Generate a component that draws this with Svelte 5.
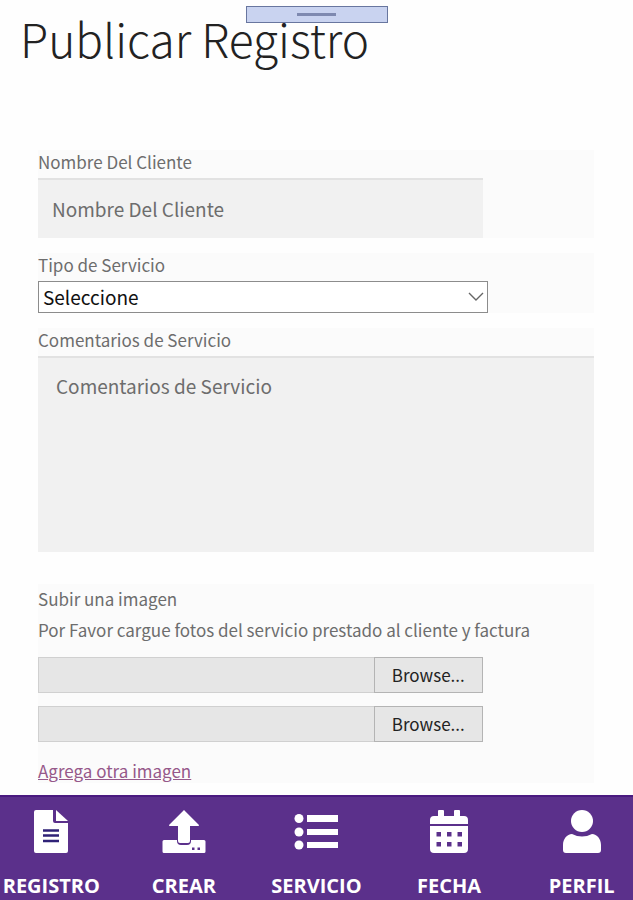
<script lang="ts">
  type Upload = { id: number; name: string };

  const navItems = [
    { id: 'registro', label: 'REGISTRO' },
    { id: 'crear', label: 'CREAR' },
    { id: 'servicio', label: 'SERVICIO' },
    { id: 'fecha', label: 'FECHA' },
    { id: 'perfil', label: 'PERFIL' },
  ];

  let client = $state('');
  let service = $state('');
  let comments = $state('');
  let uploads = $state<Upload[]>([
    { id: 1, name: '' },
    { id: 2, name: '' },
  ]);

  function browse(id: number) {
    document.getElementById(`file-${id}`)?.click();
  }

  function picked(event: Event, upload: Upload) {
    const input = event.currentTarget as HTMLInputElement;
    upload.name = input.files?.[0]?.name ?? '';
  }

  function addUpload(event: MouseEvent) {
    event.preventDefault();
    uploads.push({ id: uploads.length + 1, name: '' });
  }
</script>

<div class="page">
  <div class="handle"></div>

  <main>
    <h1>Publicar Registro</h1>

    <form>
      <div class="group">
        <label for="client">Nombre Del Cliente</label>
        <input id="client" class="field client" type="text" placeholder="Nombre Del Cliente" bind:value={client} />
      </div>

      <div class="group">
        <label for="service">Tipo de Servicio</label>
        <div class="select-wrap">
          <select id="service" bind:value={service}>
            <option value="">Seleccione</option>
          </select>
          <svg class="chevron" viewBox="0 0 16 10" aria-hidden="true">
            <path d="M1 1l7 7 7-7" fill="none" stroke="#666" stroke-width="1.4" />
          </svg>
        </div>
      </div>

      <div class="group">
        <label for="comments">Comentarios de Servicio</label>
        <textarea id="comments" class="field comments" placeholder="Comentarios de Servicio" bind:value={comments}></textarea>
      </div>

      <div class="group images">
        <p>Subir una imagen</p>
        <p class="hint">Por Favor cargue fotos del servicio prestado al cliente y factura</p>
        {#each uploads as upload (upload.id)}
          <div class="upload">
            <input class="path" type="text" readonly value={upload.name} aria-label="Imagen {upload.id}" />
            <button type="button" onclick={() => browse(upload.id)}>Browse...</button>
            <input id="file-{upload.id}" type="file" accept="image/*" hidden onchange={(e) => picked(e, upload)} />
          </div>
        {/each}
        <a class="add" href="#agregar" onclick={addUpload}>Agrega otra imagen</a>
      </div>
    </form>
  </main>

  <nav>
    <ul>
      {#each navItems as item}
        <li>
          <a href="#{item.id}">
            <svg viewBox="0 0 44 44" fill="#fff" aria-hidden="true">
              {#if item.id === 'registro'}
                <path d="M7 0h17v11a2 2 0 0 0 2 2h13v28a2 2 0 0 1-2 2H7a2 2 0 0 1-2-2V2a2 2 0 0 1 2-2z" />
                <path d="M27 0l12 11H27z" />
                <path d="M14 20.500h16M14 25.500h16M14 31h16" fill="none" stroke="#2f2277" stroke-width="2.400" />
              {:else if item.id === 'crear'}
                <path fill-rule="evenodd" d="M2 30h13v1a4 4 0 0 0 4 4h6a4 4 0 0 0 4-4v-1h13a1.500 1.500 0 0 1 1.500 1.500v10A1.500 1.500 0 0 1 42 43H2a1.500 1.500 0 0 1-1.500-1.500v-10A1.500 1.500 0 0 1 2 30zM30 37.500v2.500h2.500v-2.500zM35.500 37.500v2.500H38v-2.500z" />
                <path d="M22 0l14.500 14.500a.8.8 0 0 1-.5 1.500H28v15a2 2 0 0 1-2 2h-8a2 2 0 0 1-2-2V16H8a.8.8 0 0 1-.5-1.500z" />
              {:else if item.id === 'servicio'}
                <circle cx="5" cy="8.500" r="4.500" />
                <circle cx="5" cy="22" r="4.500" />
                <circle cx="5" cy="35" r="4.500" />
                <path d="M13 5h31v7H13zM13 19h31v6H13zM13 32h31v6H13z" />
              {:else if item.id === 'fecha'}
                <path d="M12 0h4a1 1 0 0 1 1 1v5h10V1a1 1 0 0 1 1-1h4a1 1 0 0 1 1 1v5h4a4 4 0 0 1 4 4v4H3v-4a4 4 0 0 1 4-4h4V1a1 1 0 0 1 1-1z" />
                <path fill-rule="evenodd" d="M3 16h38v23a4 4 0 0 1-4 4H7a4 4 0 0 1-4-4zM9.500 22v4.500H14V22zM20 22v4.500h4.500V22zM30.500 22v4.500H35V22zM9.500 32v4.500H14V32zM20 32v4.500h4.500V32zM30.500 32v4.500H35V32z" />
              {:else}
                <circle cx="22" cy="11" r="11" />
                <path d="M12 24q10 5 20 0c5 0 9 5 9 11v5a3 3 0 0 1-3 3H6a3 3 0 0 1-3-3v-5c0-6 4-11 9-11z" />
              {/if}
            </svg>
            <span>{item.label}</span>
          </a>
        </li>
      {/each}
    </ul>
  </nav>
</div>

<style>
  :global(body) { background: #fefefe; }
  .page {
    position: relative;
    display: flex;
    flex-direction: column;
    min-height: 100vh;
    font-family: "Noto Sans CJK SC", "Source Sans Pro", sans-serif;
    font-size: 17px;
    line-height: 24px;
    color: #6d6d6d;
  }
  .page * { box-sizing: border-box; }
  .handle {
    position: absolute;
    top: 6px;
    left: 50%;
    width: 142px;
    height: 17px;
    margin-left: -71px;
    display: flex;
    align-items: center;
    justify-content: center;
    border: 1px solid #68769f;
    background: #c9d3f0;
  }
  .handle::before { content: ""; width: 39px; height: 3px; background: #7e89b0; }
  main { flex: 1; padding: 8px 39px 10px 38px; }
  h1 {
    margin: 0 -18px 82px;
    font-size: 46px;
    line-height: 60px;
    font-weight: 300;
    color: #222;
  }
  form { display: flex; flex-direction: column; gap: 15px; }
  .group { display: flex; flex-direction: column; align-items: flex-start; background: #fbfbfb; }
  label { padding: 0 0 4px; }
  input, textarea, select, button { font: inherit; border-radius: 0; }
  .field {
    margin: 0;
    border: 0;
    border-top: 2px solid #e2e2e2;
    background: #f1f1f1;
    font-size: 19px;
    color: #6d6d6d;
    resize: none;
    display: block;
  }
  .field::placeholder { color: #6d6d6d; opacity: 1; }
  .client { width: 80%; height: 60px; padding: 0 14px 2px; }
  .comments { width: 100%; height: 196px; padding: 16px 18px; }
  .select-wrap { display: grid; align-items: center; width: 81%; }
  select {
    grid-area: 1 / 1;
    height: 32px;
    padding: 0 4px;
    border: 1px solid #8c8c8c;
    background: #fff;
    font-size: 19px;
    color: #111;
    appearance: none;
  }
  .chevron {
    grid-area: 1 / 1;
    justify-self: end;
    width: 16px;
    height: 10px;
    margin-right: 4px;
    pointer-events: none;
  }
  .images { margin-top: 17px; padding-top: 3px; gap: 7px; }
  .images p { margin: 0; }
  .images .hint { margin-bottom: 2px; }
  .upload { display: flex; width: 80%; height: 36px; margin-top: 6px; }
  .path { flex: 1; min-width: 0; border: 1px solid #d0d0d0; border-right: 0; background: #e6e6e6; }
  button { width: 109px; padding: 0; border: 1px solid #b4b4b4; background: #e6e6e6; color: #222; }
  .add { margin-top: 10px; color: #96588a; text-decoration: underline; }
  nav { overflow: hidden; border-top: 2px solid #4a1a80; background: #5b308b; }
  ul { display: grid; grid-template-columns: repeat(5, 1fr); margin: 0 -15px; padding: 13px 0 2px; list-style: none; }
  nav a { display: flex; flex-direction: column; align-items: center; gap: 20px; color: #fff; text-decoration: none; }
  nav svg { width: 44px; height: 44px; }
  nav span { font-family: "Open Sans", "Noto Sans", sans-serif; font-size: 20px; font-weight: 700; line-height: 24px; }
</style>
